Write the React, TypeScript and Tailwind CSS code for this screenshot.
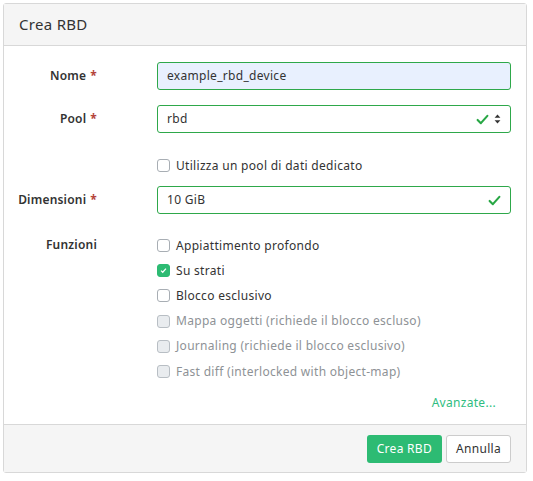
import React from "react";

const Check = ({ className = "" }: { className?: string }) => (
  <svg viewBox="0 0 16 16" className={className} width="13" height="13">
    <path d="M2 8.5 L6 12.5 L14 3.5" fill="none" stroke="#28a745" strokeWidth="2.6" strokeLinecap="round" strokeLinejoin="round" />
  </svg>
);

const Box = ({ checked = false, disabled = false }: { checked?: boolean; disabled?: boolean }) => (
  <span
    className={
      checked
        ? "w-[13px] h-[13px] rounded-[3px] bg-[#2dbb73] border border-[#2dbb73] flex items-center justify-center shrink-0"
        : disabled
        ? "w-[13px] h-[13px] rounded-[3px] bg-[#e9ecef] border border-[#b8bec4] shrink-0"
        : "w-[13px] h-[13px] rounded-[3px] bg-white border border-[#a8aeb4] shrink-0"
    }
  >
    {checked && (
      <svg viewBox="0 0 8 8" width="7" height="7">
        <path d="M1.2 4.2 L3.1 6 L6.8 1.8" fill="none" stroke="white" strokeWidth="1.4" />
      </svg>
    )}
  </span>
);

const Label = ({ text, req = true }: { text: string; req?: boolean }) => (
  <div className="w-[93px] shrink-0 text-right font-semibold text-[#333] text-[12px] tracking-[0.2px]">
    {text}
    {req && <span className="text-[#b4433a] ml-[4px] font-bold">*</span>}
  </div>
);

const CheckRow = ({ text, checked, disabled }: { text: string; checked?: boolean; disabled?: boolean }) => (
  <div className="flex items-center h-[25.2px] gap-[6px]">
    <Box checked={checked} disabled={disabled} />
    <span className={disabled ? "text-[#8e9296]" : "text-[#333]"}>{text}</span>
  </div>
);

export default function App() {
  return (
    <div className="w-[533px] h-[481px] bg-white pt-[3px] pl-[3px]" style={{ fontFamily: '"Noto Sans", "Open Sans", sans-serif' }}>
      <div className="w-[524px] h-[470px] border border-[#d8d8d8] rounded-[3px] flex flex-col text-[12px] text-[#333] tracking-[0.3px]">
        <div className="h-[42px] bg-[#f5f5f5] border-b border-[#d8d8d8] flex items-center pl-[15px] text-[15px] text-[#333] shrink-0">
          Crea RBD
        </div>
        <div className="flex-1 flex flex-col pt-[16px] pr-[15px]">
          <div className="flex items-center h-[28px]">
            <Label text="Nome" />
            <div className="ml-[60px] flex-1 h-[28px] rounded-[3px] border border-[#2ea84a] bg-[#e8f0fe] flex items-center px-[9px]">
              example_rbd_device
            </div>
          </div>
          <div className="flex items-center h-[28px] mt-[15px]">
            <Label text="Pool" />
            <div className="ml-[60px] flex-1 h-[28px] rounded-[3px] border border-[#2ea84a] bg-white flex items-center px-[9px]">
              <span className="flex-1">rbd</span>
              <Check className="mr-[5px]" />
              <svg viewBox="0 0 8 12" width="7" height="10">
                <path d="M4 0.5 L7.5 4.5 H0.5 Z M4 11.5 L7.5 7.5 H0.5 Z" fill="#333" />
              </svg>
            </div>
          </div>
          <div className="flex items-center h-[25px] mt-[20px] ml-[153px] gap-[6px]">
            <Box />
            <span>Utilizza un pool di dati dedicato</span>
          </div>
          <div className="flex items-center h-[28px] mt-[8px]">
            <Label text="Dimensioni" />
            <div className="ml-[60px] flex-1 h-[28px] rounded-[3px] border border-[#2ea84a] bg-white flex items-center px-[9px]">
              <span className="flex-1">10 GiB</span>
              <Check />
            </div>
          </div>
          <div className="flex mt-[19px]">
            <div className="pt-[3px]">
              <Label text="Funzioni" req={false} />
            </div>
            <div className="ml-[60px] flex flex-col">
              <CheckRow text="Appiattimento profondo" />
              <CheckRow text="Su strati" checked />
              <CheckRow text="Blocco esclusivo" />
              <CheckRow text="Mappa oggetti (richiede il blocco escluso)" disabled />
              <CheckRow text="Journaling (richiede il blocco esclusivo)" disabled />
              <CheckRow text="Fast diff (interlocked with object-map)" disabled />
            </div>
          </div>
          <div className="flex justify-end mt-[10px] pr-[15px]">
            <span className="text-[#2ebd80]">Avanzate...</span>
          </div>
        </div>
        <div className="h-[48px] bg-[#f5f5f5] border-t border-[#d8d8d8] flex items-center justify-end pr-[15px] gap-[4px] shrink-0">
          <button className="h-[28px] px-[10px] rounded-[3px] bg-[#2dbb73] text-white text-[12px]">Crea RBD</button>
          <button className="h-[28px] px-[9px] rounded-[3px] bg-white border border-[#ccc] text-[#333] text-[12px]">Annulla</button>
        </div>
      </div>
    </div>
  );
}
